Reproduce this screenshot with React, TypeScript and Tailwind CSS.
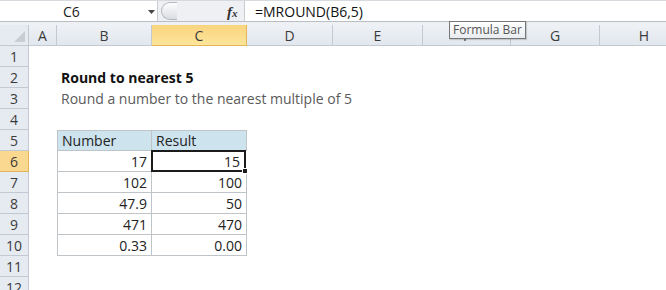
import React from "react";

const cols = [
  { l: "A", w: 28 },
  { l: "B", w: 95 },
  { l: "C", w: 95 },
  { l: "D", w: 86 },
  { l: "E", w: 90 },
  { l: "F", w: 88 },
  { l: "G", w: 89 },
  { l: "H", w: 89 },
];

const data = [
  ["17", "15"],
  ["102", "100"],
  ["47.9", "50"],
  ["471", "470"],
  ["0.33", "0.00"],
];

const font = { fontFamily: "'Open Sans', 'Liberation Sans', sans-serif" };

function RowHeader({ n }: { n: number }) {
  const sel = n === 6;
  return (
    <div
      className={`w-[29px] shrink-0 h-[21px] flex items-center justify-center border-r border-b text-[14px] text-[#3b3b3b] ${
        sel ? "bg-[#fbd88f] border-[#e2b659]" : "bg-[#e6ebf2] border-[#c3c9d2]"
      }`}
    >
      {n}
    </div>
  );
}

function Cell({
  w,
  children,
  className = "",
}: {
  w: number;
  children?: React.ReactNode;
  className?: string;
}) {
  return (
    <div className={`shrink-0 h-[21px] flex items-center ${className}`} style={{ width: w }}>
      {children}
    </div>
  );
}

export default function App() {
  return (
    <div className="w-[666px] h-[290px] overflow-hidden bg-white relative" style={font}>
      {/* formula bar */}
      <div className="h-[22px] flex border-b border-[#b9bec6] border-t border-t-[#d6d9de] bg-white">
        <div className="w-[158px] shrink-0 flex items-center relative border-r border-[#c9ccd1]">
          <span className="absolute left-[63px] text-[14px] text-[#222]">C6</span>
          <svg className="absolute left-[148px] top-[9px]" width="7" height="4" viewBox="0 0 7 4">
            <path d="M0 0 H7 L3.5 4 Z" fill="#444" />
          </svg>
        </div>
        <div className="w-[87px] shrink-0 flex items-center relative bg-[#eef0f3] border-r border-[#c9ccd1]">
          <div className="absolute left-[3px] top-[1px] w-[16px] h-[18px] rounded-l-full border border-[#b4b8be] border-r-0 bg-gradient-to-b from-[#fdfdfd] to-[#dadde2]" />
          <span
            className="absolute left-[69px] top-[0px] text-[15px] italic font-bold text-[#333]"
            style={{ fontFamily: "'Liberation Serif', serif" }}
          >
            f<span className="text-[11px]">x</span>
          </span>
        </div>
        <div className="flex-1 flex items-center pl-[10px] text-[14px] text-[#111]">=MROUND(B6,5)</div>
      </div>
      <div className="h-[3px] bg-[#eef0f3]" />
      {/* column headers */}
      <div className="flex h-[21px]">
        <div className="w-[29px] shrink-0 h-[21px] bg-[#e6ebf2] border-r border-b border-[#c3c9d2] relative overflow-hidden">
          <svg className="absolute right-[3px] bottom-[3px]" width="11" height="11" viewBox="0 0 11 11">
            <path d="M11 0 V11 H0 Z" fill="#c8cdd5" />
          </svg>
        </div>
        {cols.map((c) => (
          <div
            key={c.l}
            className={`shrink-0 h-[21px] flex items-center justify-center border-r border-b text-[14px] text-[#3b3b3b] ${
              c.l === "C"
                ? "bg-gradient-to-b from-[#f9d47e] to-[#fde59a] border-[#e2b659]"
                : "bg-gradient-to-b from-[#eef1f5] to-[#e2e7ee] border-[#c3c9d2]"
            }`}
            style={{ width: c.w }}
          >
            {c.l}
          </div>
        ))}
      </div>
      {/* rows */}
      {Array.from({ length: 12 }, (_, i) => i + 1).map((n) => {
        let content: React.ReactNode = null;
        if (n === 2)
          content = (
            <Cell w={300} className="pl-[4px] text-[14px] font-bold text-[#111]">
              Round to nearest 5
            </Cell>
          );
        if (n === 3)
          content = (
            <Cell w={400} className="pl-[4px] text-[14px] text-[#5a5a5a]">
              Round a number to the nearest multiple of 5
            </Cell>
          );
        if (n === 5)
          content = (
            <>
              <Cell w={95} className="pl-[4px] bg-[#cde3ee] border border-[#bfc4c8] text-[14px] text-[#222]">
                Number
              </Cell>
              <Cell w={95} className="pl-[4px] bg-[#cde3ee] border border-l-0 border-[#bfc4c8] text-[14px] text-[#222]">
                Result
              </Cell>
            </>
          );
        if (n >= 6 && n <= 10) {
          const [a, b] = data[n - 6];
          content = (
            <>
              <Cell w={95} className="justify-end pr-[4px] border-l border-b border-r border-[#bfc4c8] text-[14px] text-[#222]">
                {a}
              </Cell>
              <Cell
                w={95}
                className={`justify-end pr-[4px] text-[14px] text-[#222] ${
                  n === 6 ? "relative border-2 border-[#1b1b1b] -ml-[1px] -mt-[1px] h-[22px]" : "border-r border-b border-[#bfc4c8]"
                }`}
              >
                {b}
                {n === 6 && (
                  <span className="absolute -right-[4px] -bottom-[4px] w-[6px] h-[6px] bg-[#1b1b1b] border border-white" />
                )}
              </Cell>
            </>
          );
        }
        return (
          <div key={n} className="flex h-[21px]">
            <RowHeader n={n} />
            <div className="w-[28px] shrink-0" />
            <div className="flex">{content}</div>
          </div>
        );
      })}
      {/* tooltip */}
      <div
        className="absolute left-[449px] top-[21px] h-[18px] px-[3px] flex items-center border border-[#767676] bg-gradient-to-b from-white to-[#e9ecf0] text-[12px] text-[#555] shadow-[1px_1px_1px_rgba(0,0,0,0.15)]"
        style={{ fontFamily: "'Open Sans', sans-serif" }}
      >
        Formula Bar
      </div>
    </div>
  );
}
